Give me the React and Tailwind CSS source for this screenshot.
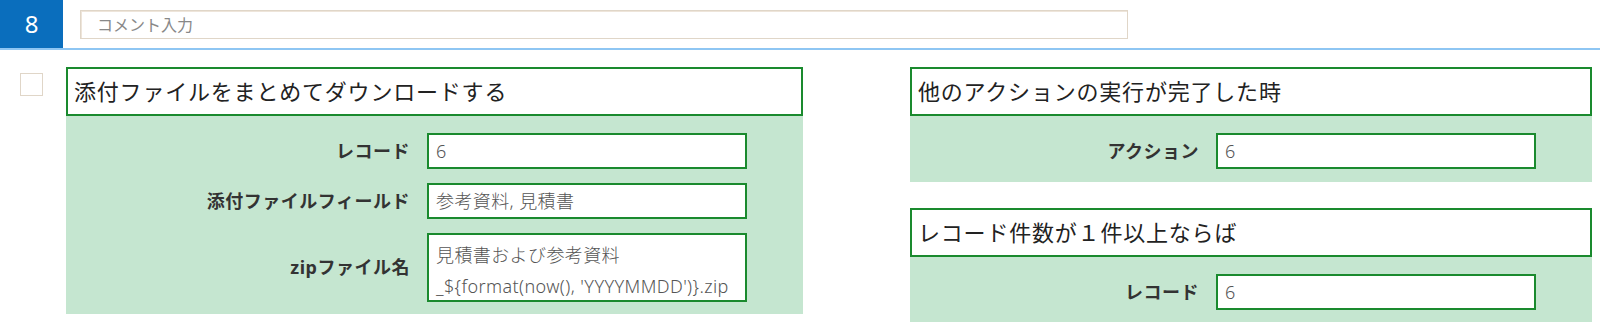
import React from "react"

const jp = { fontFamily: '"Noto Sans", "Noto Sans CJK JP", sans-serif' }

function Field({ label, value, tall }) {
  return (
    <div className="flex items-center">
      <div className="flex-1 text-right text-[18px] font-bold text-[#333] tracking-[0.5px]">{label}</div>
      <div
        className={`ml-[17px] w-[320px] border-2 border-[#1a8a2e] bg-white px-[7px] text-[18px] font-light text-[#555] tracking-[0.4px] overflow-hidden ${
          tall ? "h-[69px] pt-[5px] leading-[31px]" : "h-[36px] flex items-center"
        }`}
      >
        {value}
      </div>
    </div>
  )
}

function Card({ title, children, bodyClass }) {
  return (
    <div>
      <div className="h-[49px] border-2 border-[#1a8a2e] bg-white flex items-center pl-[6px] text-[22px] text-[#222] tracking-[0.8px]">
        {title}
      </div>
      <div className={`bg-[#c5e6d0] pr-[56px] ${bodyClass}`}>{children}</div>
    </div>
  )
}

export default function App() {
  return (
    <div className="w-[1600px] h-[331px] bg-white" style={jp}>
      <header className="flex h-[48px]">
        <div className="w-[63px] h-[48px] bg-[#0a6ebd] text-white text-[24px] flex items-center justify-center">8</div>
        <div className="ml-[17px] mt-[10px] w-[1048px] h-[29px] border border-[#e0d6c8] shadow-[inset_1px_1px_0_#eee5da] flex items-center pl-[16px] text-[16px] text-[#888]">
          コメント入力
        </div>
      </header>
      <div className="h-[2px] bg-[#8ec6f3]" />

      <main className="flex pt-[17px]">
        <div className="ml-[20px] mt-[6px] w-[23px] h-[23px] border border-[#e0d6c8] bg-white" />

        <div className="ml-[23px] w-[737px]">
          <Card title="添付ファイルをまとめてダウンロードする" bodyClass="pt-[17px] pb-[12px] flex flex-col gap-[14px]">
            <Field label="レコード" value="6" />
            <Field label="添付ファイルフィールド" value="参考資料, 見積書" />
            <Field
              label="zipファイル名"
              tall
              value={
                <>
                  見積書および参考資料
                  <br />
                  {"_${format(now(), 'YYYYMMDD')}.zip"}
                </>
              }
            />
          </Card>
        </div>

        <div className="ml-[107px] w-[682px] flex flex-col gap-[26px]">
          <Card title="他のアクションの実行が完了した時" bodyClass="pt-[17px] pb-[13px]">
            <Field label="アクション" value="6" />
          </Card>
          <Card title="レコード件数が１件以上ならば" bodyClass="pt-[17px] pb-[12px]">
            <Field label="レコード" value="6" />
          </Card>
        </div>
      </main>
    </div>
  )
}
